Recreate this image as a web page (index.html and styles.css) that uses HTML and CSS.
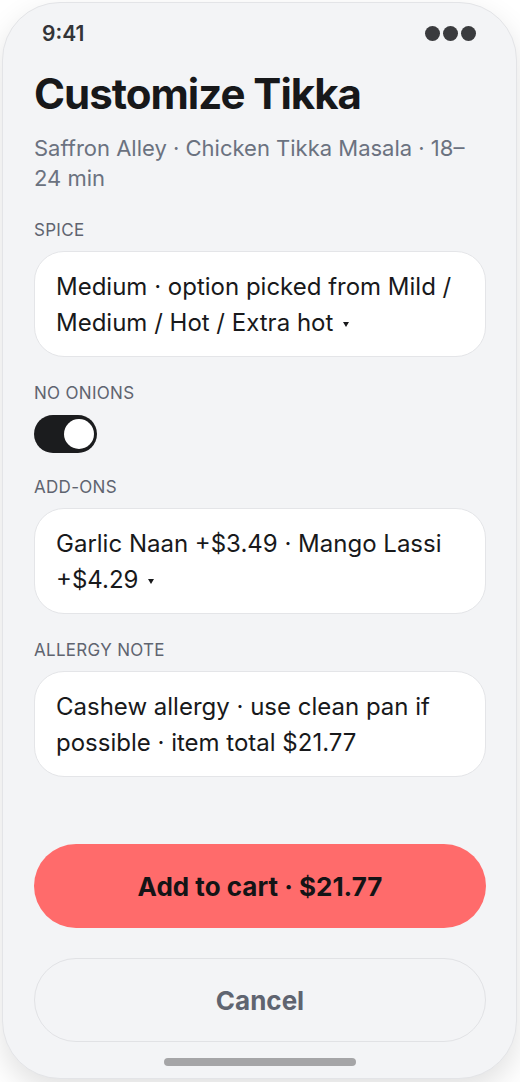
FILE: index.html
```html
<!DOCTYPE html>
<html lang="en">
<head>
<meta charset="utf-8">
<title>Customize Tikka</title>
<link rel="stylesheet" href="styles.css">
</head>
<body>
<div class="phone">
  <div class="status">
    <span class="time">9:41</span>
    <span class="dots"><i></i><i></i><i></i></span>
  </div>
  <div class="content">
    <h1 class="title">Customize Tikka</h1>
    <p class="subtitle">Saffron Alley · Chicken Tikka Masala · 18–24 min</p>

    <div class="field">
      <div class="label">SPICE</div>
      <div class="box">Medium · option picked from Mild / Medium / Hot / Extra hot<span class="caret"></span></div>
    </div>

    <div class="field">
      <div class="label">NO ONIONS</div>
      <div class="toggle"><span class="knob"></span></div>
    </div>

    <div class="field after-toggle">
      <div class="label">ADD-ONS</div>
      <div class="box">Garlic Naan +$3.49 · Mango Lassi +$4.29<span class="caret"></span></div>
    </div>

    <div class="field">
      <div class="label">ALLERGY NOTE</div>
      <div class="box">Cashew allergy · use clean pan if possible · item total $21.77</div>
    </div>
  </div>
  <div class="actions">
    <button class="btn primary">Add to cart · $21.77</button>
    <button class="btn secondary">Cancel</button>
  </div>
  <div class="home"></div>
</div>
</body>
</html>
```

FILE: styles.css
```css
* { box-sizing: border-box; }
html, body { margin: 0; padding: 0; }
body {
  background: #ffffff;
  font-family: Inter, "Noto Sans", sans-serif;
  width: 520px;
  height: 1082px;
  overflow: hidden;
}
.phone {
  margin: 2px 3px 0 2px;
  width: 515px;
  height: 1077px;
  background: #f3f4f6;
  border: 1.5px solid #e3e4e7;
  border-radius: 58px;
  box-shadow: 0 12px 30px rgba(0,0,0,0.12);
  display: flex;
  flex-direction: column;
  overflow: hidden;
}
.status {
  display: flex;
  justify-content: space-between;
  align-items: center;
  padding: 16px 40px 0 39px;
  height: 44px;
}
.time {
  font-size: 21px;
  font-weight: 600;
  color: #333438;
}
.dots { display: flex; gap: 3px; }
.dots i {
  display: block;
  width: 15px;
  height: 15px;
  border-radius: 50%;
  background: #3a3b3e;
}
.content {
  padding: 0 30px 0 31px;
  flex: 1;
}
.title {
  margin: 22px 0 0 0;
  font-size: 42px;
  line-height: 50px;
  font-weight: 700;
  color: #17181a;
  letter-spacing: -1px;
}
.subtitle {
  margin: 14px 0 0 0;
  font-size: 22px;
  line-height: 30px;
  color: #6b7280;
}
.field { margin-top: 26px; }
.field.after-toggle { margin-top: 24px; }
.subtitle + .field { margin-top: 27px; }
.label {
  font-size: 17px;
  line-height: 20px;
  color: #5f6470;
  letter-spacing: 0.3px;
}
.box {
  margin-top: 11px;
  background: #ffffff;
  border: 1.5px solid #e4e5e8;
  border-radius: 30px;
  padding: 17px 21px 15px 21px;
  font-size: 24px;
  line-height: 36px;
  color: #18191b;
}
.caret {
  display: inline-block;
  width: 0;
  height: 0;
  margin-left: 10px;
  border-left: 3.5px solid transparent;
  border-right: 3.5px solid transparent;
  border-top: 5px solid #18191b;
  vertical-align: middle;
}
.toggle {
  margin-top: 12px;
  width: 63px;
  height: 38px;
  background: #1b1c1e;
  border-radius: 19px;
  display: flex;
  align-items: center;
  justify-content: flex-end;
  padding-right: 3px;
}
.knob {
  display: block;
  width: 30px;
  height: 30px;
  background: #fff;
  border-radius: 50%;
}
.actions {
  padding: 0 30px 0 31px;
  display: flex;
  flex-direction: column;
  gap: 30px;
}
.btn {
  height: 84px;
  border-radius: 42px;
  font-family: Inter, "Noto Sans", sans-serif;
  font-size: 26px;
  font-weight: 700;
  width: 100%;
  cursor: pointer;
}
.primary {
  background: #ff6b6b;
  border: none;
  color: #141416;
}
.secondary {
  background: transparent;
  border: 1.5px solid #e1e2e5;
  color: #5f6470;
}
.home {
  width: 192px;
  height: 8px;
  border-radius: 4px;
  background: #a5a5a7;
  margin: 16px auto 12px auto;
}
```
